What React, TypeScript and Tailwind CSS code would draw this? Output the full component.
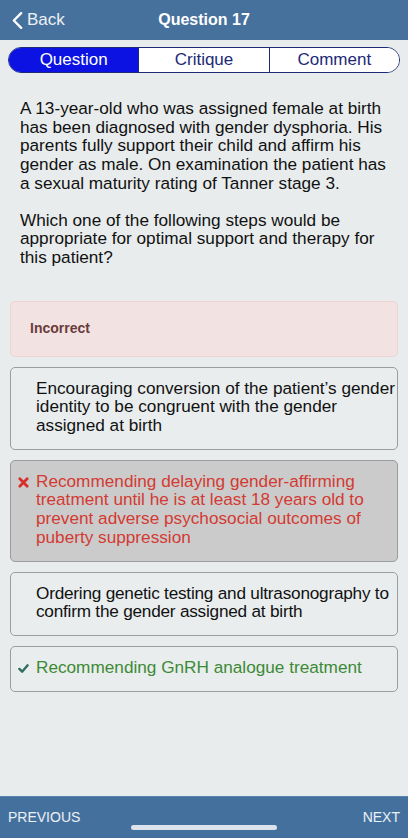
import React from "react";

const font = { fontFamily: '"Liberation Sans", Arial, sans-serif' };

const CrossIcon = () => (
  <svg viewBox="0 0 12 12" className="w-[11px] h-[11px] mt-[5px] shrink-0">
    <path d="M2 2 L10 10 M10 2 L2 10" stroke="#d92f2a" strokeWidth="3" strokeLinecap="round" />
  </svg>
);

const CheckIcon = () => (
  <svg viewBox="0 0 12 12" className="w-[11px] h-[11px] mt-[5px] shrink-0">
    <path d="M1.5 6.5 L4.5 9.5 L10.5 2.5" stroke="#2f6e62" strokeWidth="2.6" fill="none" strokeLinecap="round" strokeLinejoin="round" />
  </svg>
);

type Option = { text: string; state?: "wrong" | "right"; tight?: boolean };

const options: Option[] = [
  { text: "Encouraging conversion of the patient’s gender identity to be congruent with the gender assigned at birth" },
  {
    text: "Recommending delaying gender-affirming treatment until he is at least 18 years old to prevent adverse psychosocial outcomes of puberty suppression",
    state: "wrong",
  },
  { text: "Ordering genetic testing and ultrasonography to confirm the gender assigned at birth", tight: true },
  { text: "Recommending GnRH analogue treatment", state: "right" },
];

const App = () => {
  return (
    <div className="w-[408px] h-[838px] bg-[#e8eced] flex flex-col overflow-hidden" style={font}>
      {/* header */}
      <div className="h-[40px] bg-[#46719c] flex items-center relative shrink-0">
        <div className="flex items-center pl-[12px] gap-[4px] text-white/90">
          <svg viewBox="0 0 12 20" className="w-[11px] h-[19px]">
            <path d="M10 2 L2 10 L10 18" stroke="white" strokeWidth="2.6" fill="none" strokeLinecap="round" strokeLinejoin="round" />
          </svg>
          <span className="text-[17px]">Back</span>
        </div>
        <div className="absolute left-0 right-0 text-center text-white font-bold text-[16px] pointer-events-none">
          Question 17
        </div>
      </div>

      {/* tabs */}
      <div className="px-[8px] pt-[7px] shrink-0">
        <div className="flex h-[26px] border border-[#1d2a78] rounded-[13px] overflow-hidden text-[17px]">
          <div className="flex-1 bg-[#0b12e2] text-white flex items-center justify-center">Question</div>
          <div className="flex-1 bg-white text-[#1d2a78] flex items-center justify-center border-l border-[#1d2a78]">Critique</div>
          <div className="flex-1 bg-white text-[#1d2a78] flex items-center justify-center border-l border-[#1d2a78]">Comment</div>
        </div>
      </div>

      {/* question */}
      <div className="px-[20px] pt-[26px] text-[17.2px] leading-[18.7px] text-[#111]">
        <p>
          A 13-year-old who was assigned female at birth has been diagnosed with gender dysphoria. His parents fully
          support their child and affirm his gender as male. On examination the patient has a sexual maturity rating of
          Tanner stage 3.
        </p>
        <p className="mt-[18px]">
          Which one of the following steps would be appropriate for optimal support and therapy for this patient?
        </p>
      </div>

      {/* feedback */}
      <div className="mx-[10px] mt-[34px] h-[56px] rounded-[5px] bg-[#f2e2e2] border border-[#efd3d3] flex items-center pl-[19px] text-[14px] font-bold text-[#6b3b3b]">
        Incorrect
      </div>

      {/* options */}
      <div className="mx-[10px] mt-[10px] flex flex-col gap-[10px]">
        {options.map((o, i) => (
          <div
            key={i}
            className={`rounded-[5px] border border-[#9a9c9d] flex gap-[6px] pl-[7px] pr-0 pt-[11px] pb-[14px] text-[17.2px] leading-[18.7px] ${
              o.state === "wrong" ? "bg-[#cbcbcb]" : "bg-[#e9edee]"
            } ${o.state === "wrong" ? "text-[#d33a32]" : o.state === "right" ? "text-[#3d8a35]" : "text-[#111]"}`}
          >
            <div className="w-[12px] shrink-0 flex">
              {o.state === "wrong" && <CrossIcon />}
              {o.state === "right" && <CheckIcon />}
            </div>
            <div className={o.tight ? "tracking-[-0.22px]" : ""}>{o.text}</div>
          </div>
        ))}
      </div>

      <div className="flex-1" />

      {/* footer */}
      <div className="h-[42px] bg-[#44709d] shrink-0 relative flex items-center justify-between px-[8px] text-[14px] text-white/90 border-t border-[#5a82aa]">
        <span>PREVIOUS</span>
        <span>NEXT</span>
        <div className="absolute left-[131px] bottom-[8px] w-[146px] h-[5px] rounded-full bg-[#dde3ec]" />
      </div>
    </div>
  );
};

export default App;
